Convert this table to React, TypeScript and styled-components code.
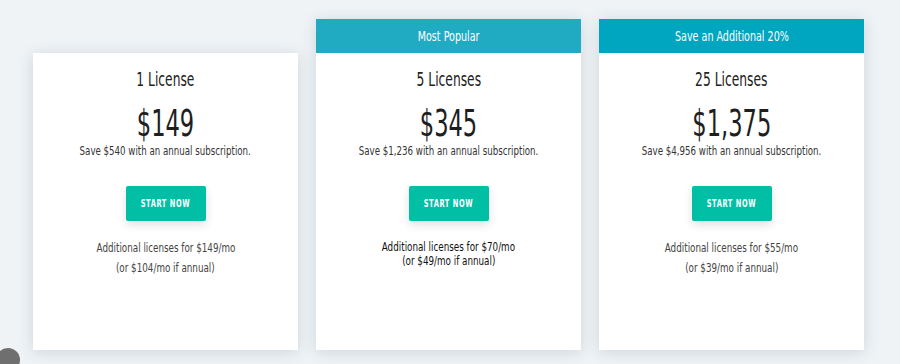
import React from "react";
import styled, { createGlobalStyle } from "styled-components";

const teal = "#00bfa5";
const font = `"DejaVu Sans Condensed", "DejaVu Sans", "Liberation Sans", sans-serif`;

const Global = createGlobalStyle`
  html, body {
    margin: 0;
    padding: 0;
    background: #eff3f6;
    overflow: hidden;
  }
`;

const Page = styled.div`
  position: relative;
  width: 900px;
  height: 364px;
  background: #eff3f6;
  font-family: ${font};
  font-stretch: condensed;
`;

const Row = styled.div`
  display: flex;
  align-items: flex-end;
  gap: 18px;
  padding: 19px 0 0 33px;
`;

const Card = styled.div`
  width: 265px;
  display: flex;
  flex-direction: column;
  box-shadow: 0 2px 14px rgba(40, 60, 80, 0.16);
  background: #fff;
`;

/* the reference uses a narrow display face; squeeze the installed one to match */
const Squeeze = styled.span<{ $x: number }>`
  display: inline-block;
  white-space: nowrap;
  transform: scaleX(${(p) => p.$x});
`;

const Banner = styled.div<{ $bg: string }>`
  height: 34px;
  background: ${(p) => p.$bg};
  color: #fff;
  font-size: 14px;
  display: flex;
  align-items: center;
  justify-content: center;
`;

const Body = styled.div`
  height: 297px;
  display: flex;
  flex-direction: column;
  align-items: center;
  padding-top: 15px;
  box-sizing: border-box;
  color: #222;
`;

const Title = styled.div`
  font-size: 19px;
  line-height: 22px;
`;

const Price = styled.div`
  font-size: 38px;
  line-height: 40px;
  margin-top: 13px;
  color: #1e1e1e;
`;

const Save = styled.div`
  font-size: 12.5px;
  line-height: 16px;
  color: #333;
`;

const Button = styled.button`
  margin-top: 27px;
  width: 80px;
  height: 35px;
  padding: 0;
  border: none;
  border-radius: 2px;
  background: ${teal};
  color: #fff;
  font-family: ${font};
  font-weight: bold;
  font-size: 10px;
  letter-spacing: 0.8px;
  box-shadow: 0 4px 10px rgba(0, 0, 0, 0.12);
`;

const Extra = styled.div<{ $tight?: boolean }>`
  margin-top: ${(p) => (p.$tight ? "19px" : "17px")};
  font-size: 12.5px;
  line-height: ${(p) => (p.$tight ? "14px" : "20px")};
  color: ${(p) => (p.$tight ? "#111" : "#444")};
  display: flex;
  flex-direction: column;
  align-items: center;
`;

const Dot = styled.div`
  position: absolute;
  left: -4px;
  top: 348px;
  width: 24px;
  height: 24px;
  border-radius: 50%;
  background: #6f6f6f;
`;

type Plan = {
  banner?: { text: string; bg: string };
  title: string;
  price: string;
  save: string;
  extra: string;
  annual: string;
  tight?: boolean;
};

const plans: Plan[] = [
  {
    title: "1 License",
    price: "$149",
    save: "Save $540 with an annual subscription.",
    extra: "Additional licenses for $149/mo",
    annual: "(or $104/mo if annual)",
  },
  {
    banner: { text: "Most Popular", bg: "#21abc2" },
    title: "5 Licenses",
    price: "$345",
    save: "Save $1,236 with an annual subscription.",
    extra: "Additional licenses for $70/mo",
    annual: "(or $49/mo if annual)",
    tight: true,
  },
  {
    banner: { text: "Save an Additional 20%", bg: "#00a6bf" },
    title: "25 Licenses",
    price: "$1,375",
    save: "Save $4,956 with an annual subscription.",
    extra: "Additional licenses for $55/mo",
    annual: "(or $39/mo if annual)",
  },
];

export default function App() {
  return (
    <Page>
      <Global />
      <Row>
        {plans.map((p) => (
          <Card key={p.title}>
            {p.banner && (
              <Banner $bg={p.banner.bg}>
                <Squeeze $x={0.76}>{p.banner.text}</Squeeze>
              </Banner>
            )}
            <Body>
              <Title>
                <Squeeze $x={0.72}>{p.title}</Squeeze>
              </Title>
              <Price>
                <Squeeze $x={0.66}>{p.price}</Squeeze>
              </Price>
              <Save>
                <Squeeze $x={0.77}>{p.save}</Squeeze>
              </Save>
              <Button>
                <Squeeze $x={0.74}>START NOW</Squeeze>
              </Button>
              <Extra $tight={p.tight}>
                <Squeeze $x={0.78}>{p.extra}</Squeeze>
                <Squeeze $x={0.78}>{p.annual}</Squeeze>
              </Extra>
            </Body>
          </Card>
        ))}
      </Row>
      <Dot />
    </Page>
  );
}
